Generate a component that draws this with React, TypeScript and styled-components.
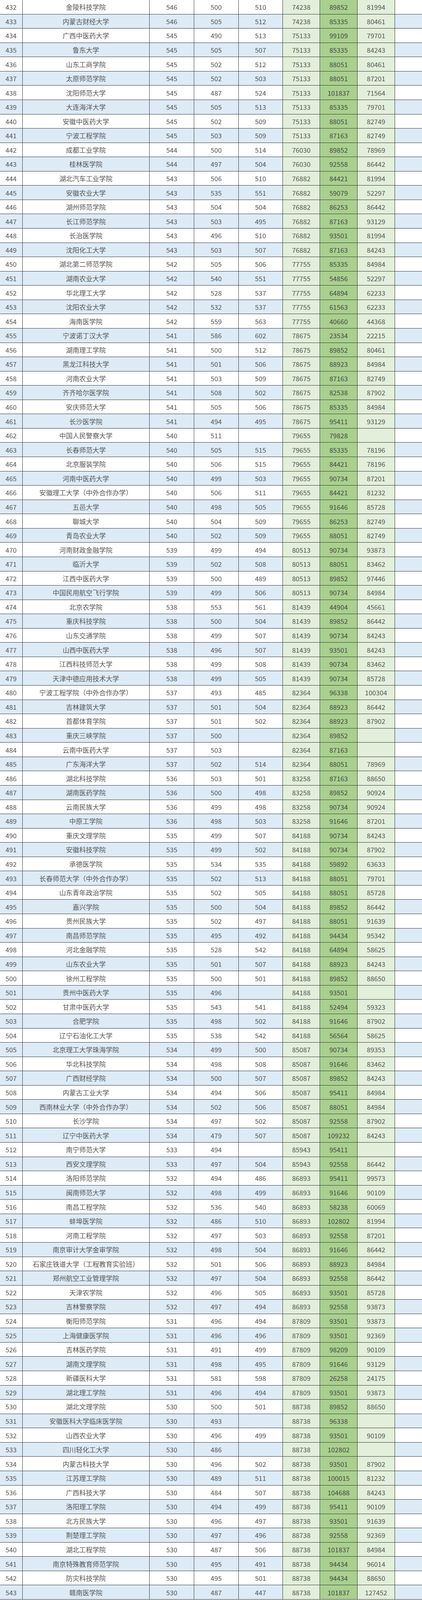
import styled, { createGlobalStyle, css } from "styled-components";

// index, school, score1, score2, score3, rank1, rank2, rank3
const rows: string[][] = [
  ["432", "金陵科技学院", "546", "500", "510", "74238", "89852", "81994"],
  ["433", "内蒙古财经大学", "546", "505", "512", "74238", "85335", "80461"],
  ["434", "广西中医药大学", "545", "490", "513", "75133", "99109", "79701"],
  ["435", "鲁东大学", "545", "505", "507", "75133", "85335", "84243"],
  ["436", "山东工商学院", "545", "502", "512", "75133", "88051", "80461"],
  ["437", "太原师范学院", "545", "502", "503", "75133", "88051", "87201"],
  ["438", "沈阳师范大学", "545", "487", "524", "75133", "101837", "71564"],
  ["439", "大连海洋大学", "545", "505", "513", "75133", "85335", "79701"],
  ["440", "安徽中医药大学", "545", "502", "509", "75133", "88051", "82749"],
  ["441", "宁波工程学院", "545", "503", "509", "75133", "87163", "82749"],
  ["442", "成都工业学院", "544", "500", "514", "76030", "89852", "78969"],
  ["443", "桂林医学院", "544", "497", "504", "76030", "92558", "86442"],
  ["444", "湖北汽车工业学院", "543", "506", "510", "76882", "84421", "81994"],
  ["445", "安徽农业大学", "543", "535", "551", "76882", "59079", "52297"],
  ["446", "湖州师范学院", "543", "504", "504", "76882", "86253", "86442"],
  ["447", "长江师范学院", "543", "503", "495", "76882", "87163", "93129"],
  ["448", "长治医学院", "543", "496", "510", "76882", "93501", "81994"],
  ["449", "沈阳化工大学", "543", "503", "507", "76882", "87163", "84243"],
  ["450", "湖北第二师范学院", "542", "505", "506", "77755", "85335", "84984"],
  ["451", "湖南农业大学", "542", "540", "551", "77755", "54856", "52297"],
  ["452", "华北理工大学", "542", "528", "537", "77755", "64894", "62233"],
  ["453", "沈阳农业大学", "542", "532", "537", "77755", "61563", "62233"],
  ["454", "海南医学院", "542", "559", "563", "77755", "40660", "44368"],
  ["455", "宁波诺丁汉大学", "541", "586", "602", "78675", "23534", "22215"],
  ["456", "湖南理工学院", "541", "500", "512", "78675", "89852", "80461"],
  ["457", "黑龙江科技大学", "541", "501", "506", "78675", "88923", "84984"],
  ["458", "河南农业大学", "541", "503", "509", "78675", "87163", "82749"],
  ["459", "齐齐哈尔医学院", "541", "508", "502", "78675", "82538", "87902"],
  ["460", "安庆师范大学", "541", "505", "506", "78675", "85335", "84984"],
  ["461", "长沙医学院", "541", "494", "495", "78675", "95411", "93129"],
  ["462", "中国人民警察大学", "540", "511", "", "79655", "79828", ""],
  ["463", "长春师范大学", "540", "505", "515", "79655", "85335", "78196"],
  ["464", "北京服装学院", "540", "506", "515", "79655", "84421", "78196"],
  ["465", "河南中医药大学", "540", "499", "503", "79655", "90734", "87201"],
  ["466", "安徽理工大学（中外合作办学）", "540", "506", "511", "79655", "84421", "81232"],
  ["467", "五邑大学", "540", "498", "505", "79655", "91646", "85728"],
  ["468", "聊城大学", "540", "504", "509", "79655", "86253", "82749"],
  ["469", "青岛农业大学", "540", "502", "509", "79655", "88051", "82749"],
  ["470", "河南财政金融学院", "539", "499", "494", "80513", "90734", "93873"],
  ["471", "临沂大学", "539", "502", "508", "80513", "88051", "83462"],
  ["472", "江西中医药大学", "539", "500", "489", "80513", "89852", "97446"],
  ["473", "中国民用航空飞行学院", "539", "499", "506", "80513", "90734", "84984"],
  ["474", "北京农学院", "538", "553", "561", "81439", "44904", "45661"],
  ["475", "重庆科技学院", "538", "500", "504", "81439", "89852", "86442"],
  ["476", "山东交通学院", "538", "499", "507", "81439", "90734", "84243"],
  ["477", "山西中医药大学", "538", "496", "507", "81439", "93501", "84243"],
  ["478", "江西科技师范大学", "538", "499", "508", "81439", "90734", "83462"],
  ["479", "天津中德应用技术大学", "538", "499", "505", "81439", "90734", "85728"],
  ["480", "宁波工程学院（中外合作办学）", "537", "493", "485", "82364", "96338", "100304"],
  ["481", "吉林建筑大学", "537", "501", "504", "82364", "88923", "86442"],
  ["482", "首都体育学院", "537", "501", "502", "82364", "88923", "87902"],
  ["483", "重庆三峡学院", "537", "500", "", "82364", "89852", ""],
  ["484", "云南中医药大学", "537", "503", "", "82364", "87163", ""],
  ["485", "广东海洋大学", "537", "502", "514", "82364", "88051", "78969"],
  ["486", "湖北科技学院", "536", "503", "501", "83258", "87163", "88650"],
  ["487", "湖南医药学院", "536", "500", "498", "83258", "89852", "90924"],
  ["488", "云南民族大学", "536", "499", "498", "83258", "90734", "90924"],
  ["489", "中原工学院", "536", "498", "503", "83258", "91646", "87201"],
  ["490", "重庆文理学院", "535", "499", "507", "84188", "90734", "84243"],
  ["491", "安徽科技学院", "535", "499", "502", "84188", "90734", "87902"],
  ["492", "承德医学院", "535", "534", "535", "84188", "59892", "63633"],
  ["493", "长春师范大学（中外合作办学）", "535", "502", "513", "84188", "88051", "79701"],
  ["494", "山东青年政治学院", "535", "502", "505", "84188", "88051", "85728"],
  ["495", "嘉兴学院", "535", "500", "504", "84188", "89852", "86442"],
  ["496", "贵州民族大学", "535", "502", "497", "84188", "88051", "91639"],
  ["497", "南昌师范学院", "535", "495", "492", "84188", "94434", "95342"],
  ["498", "河北金融学院", "535", "528", "542", "84188", "64894", "58625"],
  ["499", "山东农业大学", "535", "501", "507", "84188", "88923", "84243"],
  ["500", "徐州工程学院", "535", "500", "501", "84188", "89852", "88650"],
  ["501", "贵州中医药大学", "535", "496", "", "84188", "93501", ""],
  ["502", "甘肃中医药大学", "535", "543", "541", "84188", "52494", "59323"],
  ["503", "合肥学院", "535", "498", "502", "84188", "91646", "87902"],
  ["504", "辽宁石油化工大学", "535", "538", "542", "84188", "56564", "58625"],
  ["505", "北京理工大学珠海学院", "534", "499", "500", "85087", "90734", "89353"],
  ["506", "华北科技学院", "534", "498", "508", "85087", "91646", "83462"],
  ["507", "广西财经学院", "534", "500", "507", "85087", "89852", "84243"],
  ["508", "内蒙古工业大学", "534", "494", "506", "85087", "95411", "84984"],
  ["509", "西南林业大学（中外合作办学）", "534", "502", "506", "85087", "88051", "84984"],
  ["510", "长沙学院", "534", "497", "502", "85087", "92558", "87902"],
  ["511", "辽宁中医药大学", "534", "479", "507", "85087", "109232", "84243"],
  ["512", "南宁师范大学", "533", "494", "", "85943", "95411", ""],
  ["513", "西安文理学院", "533", "497", "504", "85943", "92558", "86442"],
  ["514", "洛阳师范学院", "532", "494", "486", "86893", "95411", "99573"],
  ["515", "闽南师范大学", "532", "498", "499", "86893", "91646", "90109"],
  ["516", "南昌工程学院", "532", "536", "540", "86893", "58238", "60069"],
  ["517", "蚌埠医学院", "532", "486", "510", "86893", "102802", "81994"],
  ["518", "河南工程学院", "532", "497", "503", "86893", "92558", "87201"],
  ["519", "南京审计大学金审学院", "532", "498", "504", "86893", "91646", "86442"],
  ["520", "石家庄铁道大学（工程教育实验班）", "532", "501", "506", "86893", "88923", "84984"],
  ["521", "郑州航空工业管理学院", "532", "497", "504", "86893", "92558", "86442"],
  ["522", "天津农学院", "532", "496", "505", "86893", "93501", "85728"],
  ["523", "吉林警察学院", "532", "497", "494", "86893", "92558", "93873"],
  ["524", "衡阳师范学院", "531", "496", "494", "87809", "93501", "93873"],
  ["525", "上海健康医学院", "531", "496", "496", "87809", "93501", "92369"],
  ["526", "吉林医药学院", "531", "491", "499", "87809", "98209", "90109"],
  ["527", "湖南文理学院", "531", "498", "495", "87809", "91646", "93129"],
  ["528", "新疆医科大学", "531", "581", "598", "87809", "26258", "24175"],
  ["529", "湖北理工学院", "531", "496", "494", "87809", "93501", "93873"],
  ["530", "湖北文理学院", "530", "500", "501", "88738", "89852", "88650"],
  ["531", "安徽医科大学临床医学院", "530", "493", "", "88738", "96338", ""],
  ["532", "山西农业大学", "530", "496", "499", "88738", "93501", "90109"],
  ["533", "四川轻化工大学", "530", "486", "", "88738", "102802", ""],
  ["534", "内蒙古科技大学", "530", "496", "502", "88738", "93501", "87902"],
  ["535", "江苏理工学院", "530", "489", "511", "88738", "100015", "81232"],
  ["536", "广西科技大学", "530", "484", "507", "88738", "104688", "84243"],
  ["537", "洛阳理工学院", "530", "494", "499", "88738", "95411", "90109"],
  ["538", "北方民族大学", "530", "496", "497", "88738", "93501", "91639"],
  ["539", "荆楚理工学院", "530", "497", "496", "88738", "92558", "92369"],
  ["540", "湖北工程学院", "530", "487", "506", "88738", "101837", "84984"],
  ["541", "南京特殊教育师范学院", "530", "495", "491", "88738", "94434", "96014"],
  ["542", "防灾科技学院", "530", "495", "501", "88738", "94434", "88650"],
  ["543", "赣南医学院", "530", "487", "447", "88738", "101837", "127452"],
];

type Tone = "plain" | "light" | "dark";

// background of the cells after the index: name, three scores, three ranks
const tones: Tone[] = ["plain", "plain", "plain", "plain", "light", "dark", "light"];

const GlobalStyle = createGlobalStyle`
  html, body {
    margin: 0;
    padding: 0;
    background: #ffffff;
  }
  body {
    font-family: "Noto Sans CJK SC", "Microsoft YaHei", "Noto Sans", sans-serif;
  }
`;

const Sheet = styled.div`
  width: 1080px;
  display: flex;
  flex-direction: column;
`;

const Row = styled.div<{ $alt: boolean }>`
  display: grid;
  grid-template-columns: 56.5px 325.5px 114px 113.5px 113.5px 95px 96px 95.6px 1fr;
  height: 36.57px;
  flex-shrink: 0;
  box-sizing: border-box;
  border-bottom: 1px solid #353535;
  background: ${({ $alt }) => ($alt ? "#ddebf7" : "#ffffff")};
`;

const Cell = styled.div<{ $tone: Tone; $first?: boolean }>`
  display: flex;
  align-items: center;
  justify-content: center;
  box-sizing: border-box;
  border-left: ${({ $first }) => ($first ? "none" : "1px solid #353535")};
  font-size: 17px;
  font-weight: 400;
  line-height: 1;
  color: #595959;
  white-space: nowrap;
  overflow: hidden;
  ${({ $tone }) =>
    $tone === "light" &&
    css`
      background: #e2efda;
    `}
  ${({ $tone }) =>
    $tone === "dark" &&
    css`
      background: #a9d08e;
      color: #4a4a4a;
    `}
`;

export default function App() {
  return (
    <>
      <GlobalStyle />
      <Sheet>
        {rows.map((row, i) => (
          <Row key={row[0]} $alt={i % 2 === 1}>
            <Cell $tone="plain" $first>
              {row[0]}
            </Cell>
            {row.slice(1).map((value, j) => (
              <Cell key={j} $tone={tones[j]}>
                {value}
              </Cell>
            ))}
            <Cell $tone="plain" />
          </Row>
        ))}
      </Sheet>
    </>
  );
}
